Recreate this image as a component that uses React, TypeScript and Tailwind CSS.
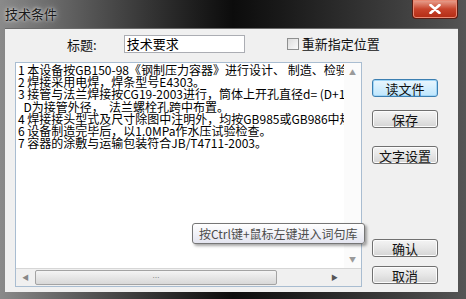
const cjk = { fontFamily: '"Noto Sans CJK SC", "Noto Sans", sans-serif' };

const lines = [
  "1 本设备按GB150-98《钢制压力容器》进行设计、 制造、检验",
  "2 焊接采用电焊，焊条型号E4303。",
  "3 接管与法兰焊接按CG19-2003进行，筒体上开孔直径d= (D+1^",
  "  D为接管外径，  法兰螺栓孔跨中布置。",
  "4 焊接接头型式及尺寸除图中注明外，均按GB985或GB986中规",
  "6 设备制造完毕后，以1.0MPa作水压试验检查。",
  "7 容器的涂敷与运输包装符合JB/T4711-2003。",
];

function Btn({ label, focused, className }: { label: string; focused?: boolean; className?: string }) {
  return (
    <div
      className={
        "w-[66px] h-[18px] rounded-[3px] flex items-center justify-center text-[13px] leading-none text-[#111] " +
        (focused
          ? "border border-[#3c7fb1] bg-gradient-to-b from-[#eaf6fd] to-[#bee6fd] shadow-[inset_0_0_0_1px_#9fd5f7] "
          : "border border-[#707070] bg-gradient-to-b from-[#f4f4f4] via-[#e6e6e6] to-[#d4d4d4] shadow-[inset_0_0_0_1px_#fcfcfc] ") +
        (className ?? "")
      }
    >
      {label}
    </div>
  );
}

export default function App() {
  return (
    <div
      className="relative w-[466px] h-[299px] overflow-hidden bg-gradient-to-r from-[#8a8a8a] via-[#0c0c0c] to-[#555]"
      style={cjk}
    >
      {/* Title bar */}
      <div className="h-[28px] flex items-start">
        <div className="mt-[6px] ml-[5px] text-[13px] leading-[16px] text-[#1a1a1a] [text-shadow:0_0_6px_#cfcfcf,0_0_3px_#e0e0e0]">
          技术条件
        </div>
        <div className="ml-auto mr-[8px] w-[46px] h-[19px] rounded-b-[4px] border border-t-0 border-[#5a1c12] bg-gradient-to-b from-[#e8a493] via-[#c7432b] to-[#b32a12] flex items-center justify-center shadow-[inset_0_0_0_1px_#e98a74]">
          <svg width="12" height="10" viewBox="0 0 12 10">
            <path d="M1.5 1 L10.5 9 M10.5 1 L1.5 9" stroke="#fff" strokeWidth="2.6" strokeLinecap="round" />
          </svg>
        </div>
      </div>

      {/* Client area */}
      <div className="ml-[5px] w-[453px] h-[264px] bg-[#f0f0f0] border-t border-[#6b6b6b]">
        <div className="h-[33px] flex items-start pt-[6px]">
          <span className="ml-[62px] mt-[2px] text-[13px] leading-[16px] text-[#111]">标题:</span>
          <div className="ml-[27px] w-[121px] h-[18px] bg-white border border-[#abadb3] border-t-[#abadb3] text-[13px] leading-[16px] pl-[2px] text-black">
            技术要求
          </div>
          <div className="ml-[42px] mt-[3px] w-[12px] h-[12px] border border-[#8e8f8f] bg-gradient-to-br from-[#dcdcdc] to-[#fafafa]" />
          <span className="ml-[3px] mt-[1px] text-[13px] leading-[16px] text-[#111]">重新指定位置</span>
        </div>

        <div className="flex">
          {/* Text area */}
          <div className="ml-[10px] w-[347px] h-[225px] bg-white border border-[#a9bdd1] flex flex-col">
            <div className="flex flex-1 min-h-0">
              <div className="flex-1 overflow-hidden pt-[1px] pl-[2px]">
                {lines.map((l) => (
                  <div key={l} className="whitespace-pre text-[12px] leading-[12.2px] text-black">
                    {l}
                  </div>
                ))}
              </div>
              <div className="w-[17px] bg-[#fbfbfb] flex flex-col items-center justify-between py-[4px] text-[7px] text-[#9a9a9a]">
                <span>▲</span>
                <span>▼</span>
              </div>
            </div>
            <div className="h-[18px] flex bg-[#f0f0f0] border-t border-[#d6d6d6]">
              <div className="w-[19px] flex items-center justify-center text-[7px] text-[#888]">◀</div>
              <div className="w-[242px] my-[1px] rounded-[2px] border border-[#a3a3a3] bg-gradient-to-b from-[#f4f4f4] to-[#d8d8d8] flex items-center justify-center">
                <span className="text-[7px] leading-none text-[#777]">⋯</span>
              </div>
              <div className="flex-1 flex items-center justify-end pr-[6px] text-[7px] text-[#555]">▶</div>
              <div className="w-[17px] bg-[#f0f0f0]" />
            </div>
          </div>

          {/* Buttons */}
          <div className="ml-[10px] flex flex-col pt-[17px]">
            <Btn label="读文件" focused />
            <Btn label="保存" className="mt-[13px]" />
            <Btn label="文字设置" className="mt-[18px]" />
            <Btn label="确认" className="mt-[75px]" />
            <Btn label="取消" className="mt-[9px]" />
          </div>
        </div>
      </div>

      {/* Tooltip */}
      <div className="absolute left-[192px] top-[223px] w-[173px] h-[21px] rounded-[3px] border border-[#767676] bg-gradient-to-b from-[#ffffff] to-[#e4e5f0] shadow-[2px_2px_3px_rgba(0,0,0,0.35)] flex items-center pl-[6px] text-[12px] leading-none text-[#4c4c4c] whitespace-nowrap">
        按Ctrl键+鼠标左键进入词句库
      </div>
    </div>
  );
}
